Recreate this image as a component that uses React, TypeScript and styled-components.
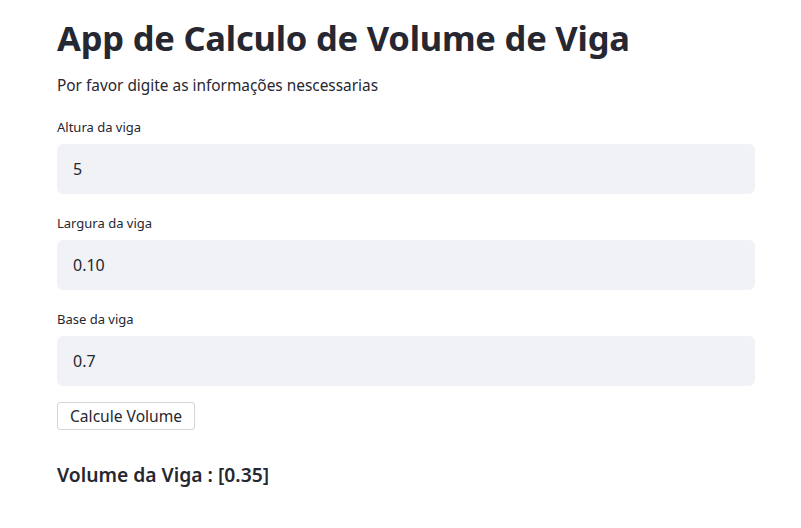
import * as React from "react";
import styled, { createGlobalStyle } from "styled-components";

const GlobalStyle = createGlobalStyle`
  body {
    margin: 0;
    background: #ffffff;
    font-family: "Noto Sans", "Open Sans", sans-serif;
    color: #262730;
  }
`;

const Main = styled.main`
  width: 698px;
  padding: 14px 0 0 57px;
  display: flex;
  flex-direction: column;
`;

const Title = styled.h1`
  font-size: 34.5px;
  font-weight: 700;
  line-height: 48px;
  margin: 0;
  letter-spacing: -0.2px;
`;

const Subtitle = styled.p`
  font-size: 15.4px;
  line-height: 24px;
  margin: 12px 0 20px;
`;

const Field = styled.div`
  display: flex;
  flex-direction: column;

  & + & {
    margin-top: 20px;
  }
`;

const Label = styled.label`
  font-size: 13px;
  line-height: 18px;
  margin-bottom: 8px;
`;

const Input = styled.input`
  box-sizing: border-box;
  height: 50px;
  border: none;
  border-radius: 6px;
  background: #f0f2f6;
  padding: 0 16px;
  font-family: inherit;
  font-size: 16px;
  color: #262730;
  outline: none;
`;

const Button = styled.button`
  align-self: flex-start;
  box-sizing: border-box;
  height: 28px;
  padding: 0 12px;
  border: 1px solid rgba(49, 51, 63, 0.2);
  border-radius: 4px;
  background: #ffffff;
  font-family: inherit;
  font-size: 15.6px;
  color: #262730;
  margin-top: 16px;
`;

const Result = styled.h3`
  font-size: 19.3px;
  font-weight: 600;
  line-height: 28px;
  margin: 31px 0 0;
`;

const fields = [
  { label: "Altura da viga", value: "5" },
  { label: "Largura da viga", value: "0.10" },
  { label: "Base da viga", value: "0.7" },
];

export default function App() {
  return (
    <>
      <GlobalStyle />
      <Main>
        <Title>App de Calculo de Volume de Viga</Title>
        <Subtitle>Por favor digite as informações nescessarias</Subtitle>
        {fields.map((f) => (
          <Field key={f.label}>
            <Label>{f.label}</Label>
            <Input defaultValue={f.value} />
          </Field>
        ))}
        <Button>Calcule Volume</Button>
        <Result>Volume da Viga : [0.35]</Result>
      </Main>
    </>
  );
}
